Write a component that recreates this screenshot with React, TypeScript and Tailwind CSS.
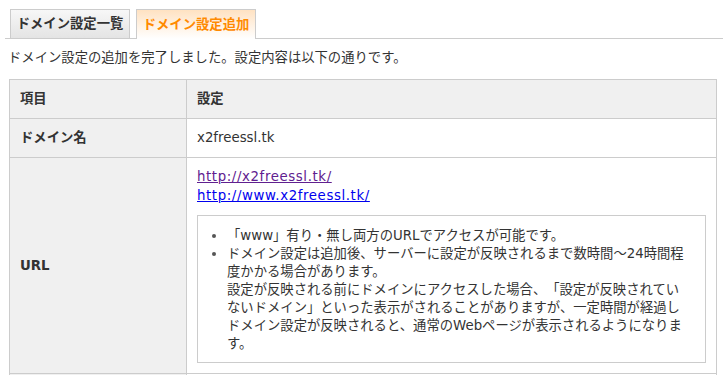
import React from 'react';

const tabs = [
  { label: 'ドメイン設定一覧', active: false },
  { label: 'ドメイン設定追加', active: true },
];

const notes = [
  '「www」有り・無し両方のURLでアクセスが可能です。',
  'ドメイン設定は追加後、サーバーに設定が反映されるまで数時間〜24時間程度かかる場合があります。\n設定が反映される前にドメインにアクセスした場合、「設定が反映されていないドメイン」といった表示がされることがありますが、一定時間が経過しドメイン設定が反映されると、通常のWebページが表示されるようになります。',
];

const App: React.FC = () => {
  return (
    <div className="w-[723px] h-[375px] overflow-hidden bg-white text-[13.33px] leading-[18px] text-[#333] [text-spacing-trim:space-all] font-['DejaVu_Sans','Noto_Sans_CJK_JP',sans-serif]">
      {/* タブ */}
      <div className="ml-[5px] mt-[9px] flex gap-[6px] border-b border-[#ccc] pl-[5px]">
        {tabs.map((tab) => (
          <div
            key={tab.label}
            className={
              tab.active
                ? 'mb-[-1px] flex h-[30px] w-[120px] items-center justify-center border border-b-0 border-[#ccc] bg-gradient-to-b from-[#ffe2c2] to-white font-bold text-[#ff8a00]'
                : 'flex h-[29px] w-[120px] items-center justify-center border border-b-0 border-[#ccc] bg-gradient-to-b from-[#f7f7f7] to-[#e4e4e4] font-bold text-[#333]'
            }
          >
            {tab.label}
          </div>
        ))}
      </div>

      <p className="mt-[10px] pl-[8px]">ドメイン設定の追加を完了しました。設定内容は以下の通りです。</p>

      <table className="ml-[9px] mt-[12px] w-[708px] border-collapse">
        <tbody>
          <tr>
            <th className="w-[177px] border border-[#ccc] bg-[#f0f0f0] px-[10px] py-[10px] text-left font-bold">項目</th>
            <th className="border border-[#ccc] bg-[#f0f0f0] px-[10px] py-[10px] text-left font-bold">設定</th>
          </tr>
          <tr>
            <th className="border border-[#ccc] bg-[#f0f0f0] px-[10px] py-[10px] text-left font-bold">ドメイン名</th>
            <td className="border border-[#ccc] px-[10px] py-[10px]">x2freessl.tk</td>
          </tr>
          <tr>
            <th className="border border-[#ccc] bg-[#f0f0f0] px-[10px] text-left font-bold">URL</th>
            <td className="border border-[#ccc] px-[10px] pt-[9px] pb-[10px]">
              <a href="#" className="block w-fit leading-[19px] tracking-[0.6px] text-[#60208f] underline">http://x2freessl.tk/</a>
              <a href="#" className="block w-fit leading-[19px] tracking-[0.6px] text-[#0000ee] underline">http://www.x2freessl.tk/</a>
              <div className="mt-[10px] border border-[#ccc] pt-[11px] pb-[9px] pl-[29px] pr-[14px]">
                <ul className="list-disc">
                  {notes.map((n) => (
                    <li key={n} className="whitespace-pre-line marker:text-[#555]">{n}</li>
                  ))}
                </ul>
              </div>
            </td>
          </tr>
          <tr>
            <th className="border border-[#ccc] bg-[#f0f0f0] px-[10px] py-[10px] text-left font-bold">&nbsp;</th>
            <td className="border border-[#ccc] px-[10px] py-[10px]">&nbsp;</td>
          </tr>
        </tbody>
      </table>
    </div>
  );
};

export default App;
